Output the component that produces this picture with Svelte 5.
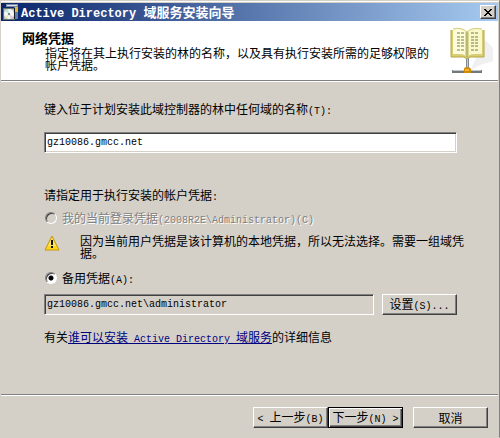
<script>
	let domain = $state('gz10086.gmcc.net');
	let account = $state('gz10086.gmcc.net\\administrator');
	let credential = $state('alternate');
</script>

<main class="window">
	<header class="titlebar">
		<svg class="app-icon" width="16" height="16" viewBox="0 0 16 16" aria-hidden="true">
			<path d="M3 0h12v3H3z" fill="#7c8aa5" />
			<path d="M4 1h10v1H4z" fill="#d9dfeb" />
			<path d="M11 3h4v12h-4z" fill="#5d7dac" />
			<path d="M12 3h3v5h-3z" fill="#dfb638" />
			<path d="M0 4h12v12H0z" fill="#657467" />
			<path d="M1 5h10v10H1z" fill="#b7bdb9" />
			<circle cx="6" cy="10" r="5" fill="#f4f5f4" />
			<path d="M6 10 2 7a5 5 0 0 1 3-2z" fill="#b9e3df" />
			<path d="m6 10 4 3-2 2z" fill="#dfc4e5" />
			<path d="m6 10-4 3 2 2z" fill="#e6e9a5" />
			<circle cx="6" cy="10" r="1" fill="#59615d" />
			<path d="M11 4h1v11h-1z" fill="#171d24" />
		</svg>
		<h1><span class="latin">{'Active Directory '}</span>域服务安装向导</h1>
		<button type="button" class="close" aria-label="关闭">
			<svg width="8" height="7" viewBox="0 0 8 7" shape-rendering="crispEdges" aria-hidden="true">
				<path d="M0 0h2v1H0zM6 0h2v1H6zM1 1h2v1H1zM5 1h2v1H5zM2 2h4v1H2zM3 3h2v1H3zM2 4h4v1H2zM1 5h2v1H1zM5 5h2v1H5zM0 6h2v1H0zM6 6h2v1H6z" />
			</svg>
		</button>
	</header>

	<section class="banner">
		<div class="banner-text">
			<h2>网络凭据</h2>
			<p>指定将在其上执行安装的林的名称，以及具有执行安装所需的足够权限的帐户凭据。</p>
		</div>
		<svg class="book" width="44" height="48" viewBox="0 0 44 48" aria-hidden="true">
			<path d="M35 13 43 21v13L30 38l-10 6 6-13z" fill="#f0f0f0" />
			<path d="M16 29h3v13h-3z" fill="#7e8a90" />
			<path d="M17 29h1v13h-1z" fill="#c4cdd1" />
			<path d="M2 43h30v3H2z" fill="#73787b" />
			<path d="M3 43h28v1H3z" fill="#c1c5c7" />
			<path d="M14 42q0-2 3-2t4 2v4h-7z" fill="#d28b08" />
			<path d="M15 42h4v2h-4z" fill="#f4b72b" />
			<path d="M1 3h2v24q9-1 14 2 5-3 15-2V3h2v27H20l-3 2-3-2H1z" fill="#d9cd72" />
			<path d="M1 3v27h13l3 2 3-2h14V3" fill="none" stroke="#b5a645" />
			<path d="M3 2q9-2 14 3v24q-5-4-14-2z" fill="#fdfdd8" />
			<path d="M32 2q-10-2-15 3v24q5-4 15-2z" fill="#f9f8c8" />
			<path d="M3 2q9-2 14 3 5-5 15-3" fill="none" stroke="#d1c975" />
			<path d="M15 4q2 1 2 3v22l-2-1zM19 4q-2 1-2 3v22l2-1z" fill="#dedb96" />
			<path d="M17 5v25" stroke="#9a954c" />
			<path
				d="M7 6h7M7 10h7M7 13h7M7 16h7M7 19h7M7 23h7M21 6h7M21 10h7M21 13h7M21 16h7M21 19h7M21 23h7"
				stroke="#777a4c"
				stroke-dasharray="3 1"
			/>
		</svg>
	</section>

	<form id="wizard" class="content" onsubmit={(event) => event.preventDefault()}>
		<label class="line" for="domain">键入位于计划安装此域控制器的林中任何域的名称<span class="latin">(T):</span></label>
		<input id="domain" class="field domain" type="text" bind:value={domain} />

		<fieldset>
			<legend class="line">请指定用于执行安装的帐户凭据<span class="latin">:</span></legend>

			<label class="option disabled">
				<input type="radio" name="credential" value="current" bind:group={credential} disabled />
				<span>我的当前登录凭据<span class="latin">(2008R2E\Administrator)(C)</span></span>
			</label>

			<div class="warning">
				<svg width="16" height="16" viewBox="0 0 16 16" aria-hidden="true">
					<path d="M8 1 15 15H1z" fill="#ffd51c" stroke="#c59712" stroke-linejoin="round" />
					<path d="M8 3 12 11H4z" fill="#ffe765" />
					<path d="M7 5h2v5H7zM7 11h2v2H7z" fill="#111111" />
				</svg>
				<p>因为当前用户凭据是该计算机的本地凭据，所以无法选择。需要一组域凭据。</p>
			</div>

			<label class="option">
				<input type="radio" name="credential" value="alternate" bind:group={credential} />
				<span>备用凭据<span class="latin">(A):</span></span>
			</label>

			<div class="account">
				<input class="field" type="text" aria-label="备用凭据" bind:value={account} readonly />
				<button type="button" class="button">设置<span class="latin">(S)...</span></button>
			</div>
		</fieldset>

		<p class="help line">
			有关<a href="#help">谁可以安装<span class="latin">{' Active Directory '}</span>域服务</a>的详细信息
		</p>
	</form>

	<footer>
		<div class="steps">
			<button type="button" class="button"><span class="latin">{'< '}</span>上一步<span class="latin">(B)</span></button>
			<button type="submit" form="wizard" class="button default">下一步<span class="latin">{'(N) >'}</span></button>
		</div>
		<button type="button" class="button">取消</button>
	</footer>
</main>

<style>
	:global(body) {
		margin: 0;
		background: #d4d0c8;
	}

	.window {
		display: flex;
		flex-direction: column;
		box-sizing: border-box;
		min-height: 100vh;
		padding: 1px 1px 0 0;
		border: 1px solid #d4d0c8;
		border-right-color: #808080;
		box-shadow: inset 0 1px #ffffff;
		background: #d4d0c8;
		color: #000000;
		font: 12px/12px 'Noto Sans CJK SC', sans-serif;
	}

	h1,
	h2,
	p {
		margin: 0;
	}

	.latin {
		font-family: 'Liberation Mono', monospace;
		font-size: 10px;
		line-height: 1;
		white-space: pre;
	}

	.titlebar {
		display: flex;
		align-items: center;
		height: 18px;
		margin-top: 1px;
		padding: 0 2px;
		background: linear-gradient(to right, #0a246a, #a6caf0);
	}

	.titlebar h1 {
		flex: 1;
		margin-left: 2px;
		color: #ffffff;
		font-size: 13px;
		font-weight: 700;
		line-height: 18px;
		white-space: nowrap;
	}

	.titlebar .latin {
		font-size: 12px;
	}

	.button,
	.close {
		box-sizing: border-box;
		padding: 0;
		border: 1px solid;
		border-color: #ffffff #404040 #404040 #ffffff;
		box-shadow: inset -1px -1px #808080;
		background: #d4d0c8;
		color: #000000;
		font: inherit;
	}

	.close {
		display: grid;
		place-items: center;
		width: 16px;
		height: 14px;
	}

	.banner {
		display: flex;
		justify-content: space-between;
		box-sizing: border-box;
		min-height: 60px;
		padding: 6px 4px 0 21px;
		border-bottom: 1px solid #808080;
		box-shadow: 0 1px #ffffff;
		background: #ffffff;
	}

	.banner-text {
		padding-top: 4px;
	}

	.banner h2 {
		font-size: 13px;
		line-height: 14px;
	}

	.banner p {
		max-width: 390px;
		margin: 2px 0 0 23px;
	}

	.book {
		flex: none;
	}

	.content {
		flex: 1;
		padding: 20px 41px 0 43px;
	}

	.line {
		display: block;
		line-height: 16px;
	}

	.field {
		box-sizing: border-box;
		width: 100%;
		min-width: 0;
		height: 21px;
		padding: 0 2px;
		border: 1px solid;
		border-color: #808080 #ffffff #ffffff #808080;
		border-radius: 0;
		outline: 0;
		box-shadow: inset 1px 1px #404040;
		background: #ffffff;
		color: #000000;
		font: 10px/16px 'Liberation Mono', monospace;
	}

	.domain {
		display: block;
		margin-top: 15px;
		box-shadow:
			inset 1px 1px #404040,
			inset -1px -1px #d4d0c8;
	}

	.field[readonly] {
		background: #d4d0c8;
	}

	fieldset {
		min-width: 0;
		margin: 34px 0 0;
		padding: 0;
		border: 0;
	}

	legend {
		padding: 0;
	}

	.option {
		display: flex;
		align-items: center;
		gap: 5px;
		width: fit-content;
		margin-top: 7px;
		line-height: 16px;
	}

	.option input {
		box-sizing: border-box;
		width: 12px;
		height: 12px;
		margin: 0 0 0 1px;
		appearance: none;
		border: 1px solid;
		border-color: #808080 #ffffff #ffffff #808080;
		border-radius: 50%;
		box-shadow: inset 1px 1px #404040;
		background: #ffffff;
	}

	.option input:checked {
		background: radial-gradient(circle, #000000 2px, #ffffff 3px);
	}

	.option input:disabled {
		background: #d4d0c8;
	}

	.disabled {
		color: #808080;
		text-shadow: 1px 1px #ffffff;
	}

	.warning {
		display: flex;
		gap: 20px;
		margin: 9px -10px 0 0;
	}

	.warning svg {
		flex: none;
	}

	.warning p {
		max-width: 390px;
	}

	.warning + .option {
		margin-top: 11px;
	}

	.account {
		display: flex;
		gap: 8px;
		margin-top: 8px;
	}

	.account .field {
		flex: 1;
	}

	.button {
		flex: none;
		width: 75px;
		height: 21px;
		white-space: nowrap;
	}

	.default {
		border-color: #000000;
		box-shadow:
			inset 1px 1px #ffffff,
			inset -1px -1px #404040,
			inset -2px -2px #808080;
	}

	.help {
		margin-top: 14px;
	}

	a {
		color: #000080;
		text-decoration: underline;
	}

	footer {
		display: flex;
		justify-content: flex-end;
		gap: 10px;
		padding: 12px 10px 9px 0;
		border-top: 1px solid #808080;
		box-shadow: inset 0 1px #ffffff;
	}

	.steps {
		display: flex;
	}
</style>
